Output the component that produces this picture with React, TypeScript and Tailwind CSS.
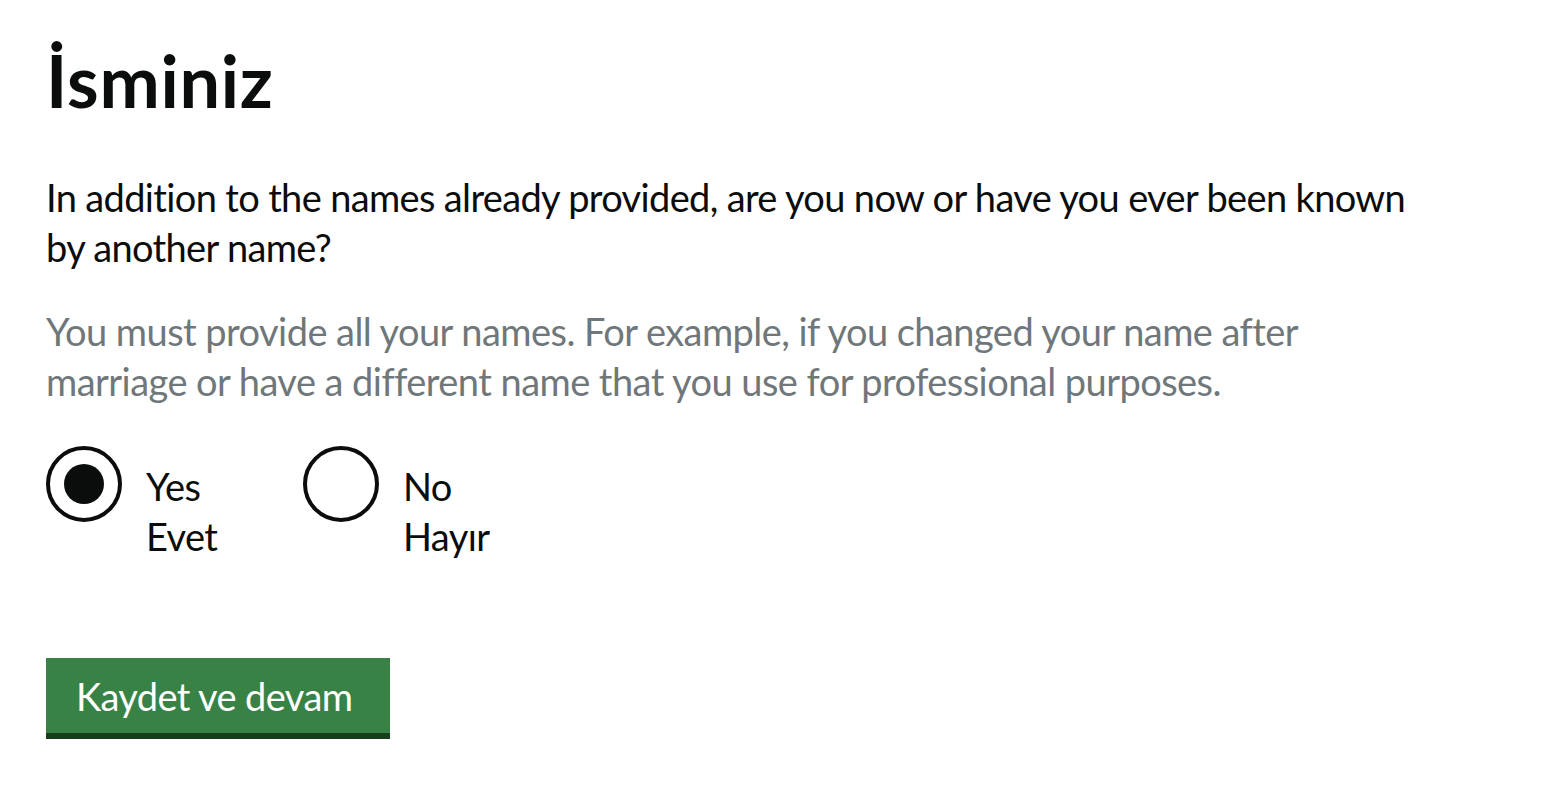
import { useState } from 'react'

const options = [
  { value: 'yes', en: 'Yes', tr: 'Evet' },
  { value: 'no', en: 'No', tr: 'Hayır' },
]

export default function App() {
  const [choice, setChoice] = useState('yes')

  return (
    <div className="min-h-screen bg-white pl-[46px] pt-[40px] text-[#0b0c0c] font-['Lato',sans-serif] [font-variant-ligatures:none]">
      <h1 className="text-[72px] font-bold leading-[80px] tracking-[0.7px]">İsminiz</h1>

      <p className="mt-[52px] w-[1380px] text-[38px] leading-[50px] tracking-[-0.65px]">
        In addition to the names already provided, are you now or have you ever been known by another name?
      </p>

      <p className="mt-[34px] w-[1380px] text-[38px] leading-[50px] tracking-[-0.55px] text-[#6f777b]">
        You must provide all your names. For example, if you changed your name after marriage or have a different name that you use for professional purposes.
      </p>

      <div className="mt-[40px] flex">
        {options.map((o) => (
          <label key={o.value} className="flex w-[257px] cursor-pointer items-start">
            <input
              type="radio"
              name="other-name"
              value={o.value}
              checked={choice === o.value}
              onChange={() => setChoice(o.value)}
              className="sr-only"
            />
            <span className="flex h-[76px] w-[76px] shrink-0 items-center justify-center rounded-full border-[4px] border-[#0b0c0c]">
              {choice === o.value && <span className="h-[40px] w-[40px] rounded-full bg-[#0b0c0c]" />}
            </span>
            <span className="ml-[24px] pt-[15px] text-[38px] leading-[50px] tracking-[-0.6px]">
              <span className="block">{o.en}</span>
              <span className="block">{o.tr}</span>
            </span>
          </label>
        ))}
      </div>

      <button className="mt-[97px] block h-[75px] w-[344px] bg-[#398246] pl-[30px] text-left font-['Lato',sans-serif] text-[38px] leading-[50px] tracking-[-0.6px] text-white shadow-[0_6px_0_#173e1d]">
        Kaydet ve devam
      </button>
    </div>
  )
}
